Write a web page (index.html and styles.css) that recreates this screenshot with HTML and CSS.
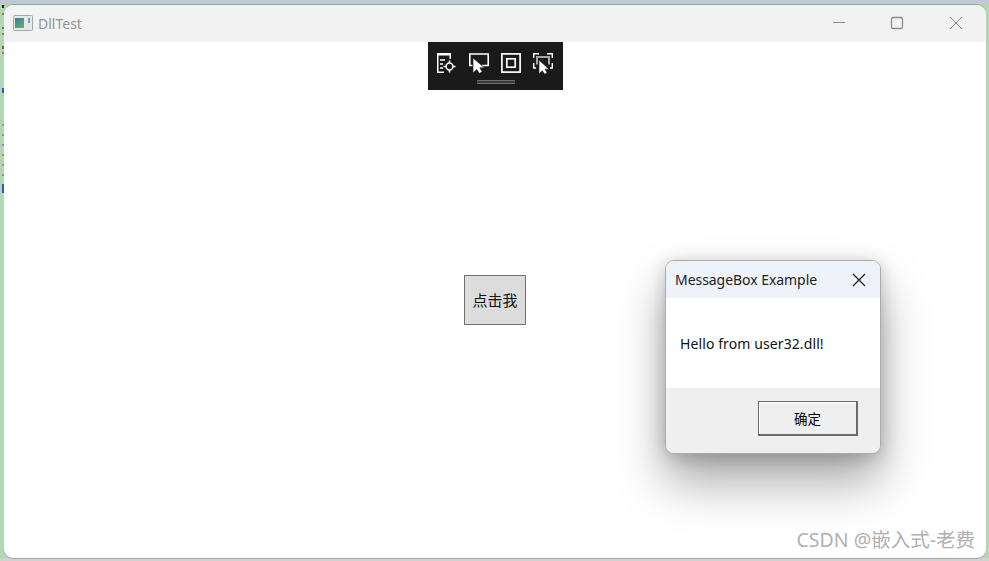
FILE: index.html
```html
<!DOCTYPE html>
<html lang="en">
<head>
    <meta charset="UTF-8">
    <title>DllTest</title>
    <link rel="stylesheet" href="styles.css">
</head>
<body>
    <div class="window">
        <header class="titlebar">
            <svg class="app-icon" width="20" height="16" viewBox="0 0 20 16">
                <defs>
                    <linearGradient id="appFill" x1="0" y1="0" x2="0.6" y2="1">
                        <stop offset="0" stop-color="#2f7f9c"/>
                        <stop offset="1" stop-color="#63a86a"/>
                    </linearGradient>
                </defs>
                <rect x="0.5" y="0.5" width="19" height="15" rx="1" fill="#e6e9ec" stroke="#a3a7aa"/>
                <rect x="2" y="3" width="9" height="10" fill="url(#appFill)"/>
                <rect x="15" y="3" width="2" height="5" fill="#6fa4bd"/>
            </svg>
            <span class="app-title">DllTest</span>
            <div class="window-controls">
                <svg width="14" height="14" viewBox="0 0 14 14"><path d="M2 6.5H14" stroke="#8a8a8a" fill="none"/></svg>
                <svg width="14" height="14" viewBox="0 0 14 14"><rect x="1.5" y="1.5" width="11" height="11" rx="1.5" stroke="#8a8a8a" stroke-width="1.3" fill="none"/></svg>
                <svg width="14" height="14" viewBox="0 0 14 14"><path d="M1 1L13 13M13 1L1 13" stroke="#8a8a8a" fill="none"/></svg>
            </div>
        </header>
        <main class="content">
            <div class="debug-toolbar">
                <div class="debug-icons">
                    <svg width="20" height="20" viewBox="0 0 20 20" fill="none" stroke="#fff" stroke-width="1.5">
                        <path d="M0 1.2H14" stroke-width="2.4"/>
                        <path d="M0.75 1V19.25H7M13.25 1V6"/>
                        <path d="M3 7H8M3 11H6M3 15H6"/>
                        <circle cx="12.5" cy="13.5" r="3.4"/>
                        <path d="M12.5 7.5V10M12.5 17V19.5M6.5 13.5H9M16 13.5H18.5"/>
                    </svg>
                    <svg width="20" height="20" viewBox="0 0 20 20" fill="none" stroke="#fff" stroke-width="1.6">
                        <path d="M3.5 12.5H0.8V1H19.2V12.5H13"/>
                        <path d="M4 5V20L7.7 16.5L10.5 20.5L13.2 18.6L10.8 14.8H15.5Z" fill="#fff" stroke="#1a1a1a" stroke-width="0.6"/>
                    </svg>
                    <svg width="20" height="20" viewBox="0 0 20 20" fill="none" stroke="#fff" stroke-width="1.7">
                        <rect x="0.9" y="0.9" width="18.2" height="18.2"/>
                        <rect x="5.8" y="5.8" width="8.4" height="8.4"/>
                    </svg>
                    <svg width="20" height="20" viewBox="0 0 20 20" fill="none" stroke="#fff" stroke-width="1.4">
                        <path d="M0.7 5V0.8H6M14 0.8H19.3V5M0.7 10V15H3M19.3 10V15H17"/>
                        <path d="M4 11.5V4H16V11.5" stroke="#a8a8a8" stroke-width="2"/>
                        <path d="M6 7V21L9.2 17.7L11.8 21.2L14.2 19.5L12 16.2H16Z" fill="#fff" stroke="#1a1a1a" stroke-width="0.6"/>
                    </svg>
                </div>
                <div class="drag-handle"></div>
            </div>
            <button class="click-btn" type="button">点击我</button>
        </main>
        <div class="msgbox">
            <div class="msgbox-title">
                <span>MessageBox Example</span>
                <svg width="14" height="14" viewBox="0 0 14 14"><path d="M1 1L13 13M13 1L1 13" stroke="#1a1a1a" stroke-width="1.2" fill="none"/></svg>
            </div>
            <div class="msgbox-body">Hello from user32.dll!</div>
            <div class="msgbox-footer">
                <button class="ok-btn" type="button">确定</button>
            </div>
        </div>
        <div class="watermark">CSDN @嵌入式-老费</div>
    </div>
</body>
</html>
```

FILE: styles.css
```css
/* Desktop behind the window */
* {
    box-sizing: border-box;
    margin: 0;
    padding: 0;
}

html {
    height: 561px;
    overflow: hidden;
    /* code editor text peeking out on the left edge, then top and bottom strips */
    background:
        linear-gradient(to bottom,
            transparent 5px, #222 5px, #222 8px,
            transparent 8px, transparent 13px, #a08030 13px, #a08030 15px,
            transparent 15px, transparent 27px, #7d6a35 27px, #7d6a35 29px,
            transparent 29px, transparent 33px, #a08030 33px, #a08030 35px,
            transparent 35px, transparent 46px, #7d6a35 46px, #7d6a35 49px,
            transparent 49px, transparent 52px, #a08030 52px, #a08030 54px,
            transparent 54px, transparent 88px, #3a50d0 88px, #3a50d0 93px,
            transparent 93px, transparent 124px, #8a93a8 124px, #8a93a8 126px,
            transparent 126px, transparent 134px, #8f8f7a 134px, #8f8f7a 136px,
            transparent 136px, transparent 144px, #8a93a8 144px, #8a93a8 146px,
            transparent 146px, transparent 154px, #8f8f7a 154px, #8f8f7a 156px,
            transparent 156px, transparent 164px, #8a93a8 164px, #8a93a8 166px,
            transparent 166px, transparent 174px, #8f8f7a 174px, #8f8f7a 176px,
            transparent 176px, transparent 184px, #3a50d0 184px, #3a50d0 193px,
            transparent 193px) 2px 0 / 2px 200px no-repeat,
        linear-gradient(#c3c7dc, #c3c7dc) 0 0 / 100% 3px no-repeat,
        linear-gradient(#d2d2d2, #d2d2d2) 0 100% / 100% 3px no-repeat,
        #b4d6b6;
}

body {
    height: 561px;
    overflow: hidden;
    padding: 5px 3px 3px 4px;
    font-family: "Open Sans", "Noto Sans CJK SC", sans-serif;
}

.window {
    position: relative;
    display: flex;
    flex-direction: column;
    height: 553px;
    background: #fff;
    border-radius: 9px;
    overflow: hidden;
    box-shadow: 0 1px 0 #a5a5a5, 0 -1px 0 #8fb094;
}

/* Title bar */
.titlebar {
    display: flex;
    align-items: center;
    height: 37px;
    flex-shrink: 0;
    background: #f2f2f2;
    padding: 0 0 1px 9px;
}

.app-icon {
    margin-right: 5px;
}

.app-title {
    font-family: "Noto Sans", sans-serif;
    font-size: 14px;
    color: #929292;
}

.window-controls {
    display: flex;
    gap: 45px;
    margin-left: auto;
    margin-right: 23px;
}

/* Main client area */
.content {
    flex: 1;
    position: relative;
    display: flex;
    align-items: center;
    justify-content: center;
}

.debug-toolbar {
    position: absolute;
    top: 0;
    left: 424px;
    width: 135px;
    height: 48px;
    background: #1a1a1a;
    display: flex;
    flex-direction: column;
    align-items: center;
    padding-top: 11px;
}

.debug-icons {
    display: flex;
    gap: 12px;
    margin-right: 1px;
}

.debug-icons svg {
    overflow: visible;
}

.drag-handle {
    width: 38px;
    height: 4px;
    margin-top: 7px;
    background: #3a3a3a;
    border-top: 1px solid #707070;
    border-bottom: 1px solid #707070;
}

.click-btn {
    width: 62px;
    height: 50px;
    padding-bottom: 2px;
    background: #dcdcdc;
    border: 1px solid #707070;
    font-family: "Noto Sans CJK SC", sans-serif;
    font-size: 15px;
    color: #111;
}

/* Message box */
.msgbox {
    position: absolute;
    left: 661px;
    top: 255px;
    width: 216px;
    height: 194px;
    display: flex;
    flex-direction: column;
    background: #fff;
    border: 1px solid #aaa;
    border-radius: 9px;
    overflow: hidden;
    box-shadow: 0 28px 48px rgba(0, 0, 0, 0.34), 0 3px 18px rgba(0, 0, 0, 0.2);
}

.msgbox-title {
    display: flex;
    align-items: center;
    justify-content: space-between;
    height: 37px;
    padding: 0 14px 0 9px;
    background: #eff2f9;
    font-family: "Noto Sans", sans-serif;
    font-size: 14px;
    letter-spacing: -0.05px;
    color: #222;
}

.msgbox-body {
    height: 90px;
    padding: 36px 0 0 14px;
    font-family: "Noto Sans", sans-serif;
    font-size: 14px;
    letter-spacing: 0.1px;
    color: #111;
}

.msgbox-footer {
    flex: 1;
    display: flex;
    justify-content: flex-end;
    align-items: flex-start;
    background: #efefef;
    padding: 13px 22px 0 0;
}

.ok-btn {
    width: 100px;
    height: 35px;
    background: #efefef;
    border: 1px solid #6a6a6a;
    border-right-width: 2px;
    border-bottom-width: 2px;
    box-shadow: inset 1px 1px 0 #fff;
    font-family: "Noto Sans CJK SC", sans-serif;
    font-size: 13.5px;
    color: #000;
}

.watermark {
    position: absolute;
    right: 11px;
    bottom: 5px;
    font-family: "Noto Sans", "Noto Sans CJK SC", sans-serif;
    font-size: 19.5px;
    color: #b0b0b0;
}
```
